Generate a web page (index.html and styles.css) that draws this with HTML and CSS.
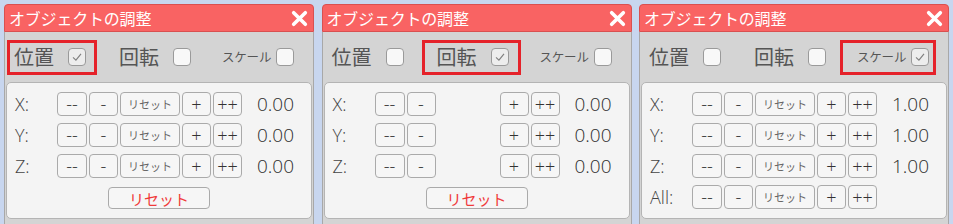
FILE: index.html
```html
<!DOCTYPE html>
<html lang="ja">
<head>
<meta charset="utf-8">
<link rel="stylesheet" href="styles.css">
</head>
<body>
<div class="panels">
  <!-- Panel 1: position -->
  <div class="panel">
    <div class="titlebar"><span class="title">オブジェクトの調整</span>
      <svg class="close" viewBox="0 0 16 16"><path d="M2.5 2.5 L13.5 13.5 M13.5 2.5 L2.5 13.5"/></svg></div>
    <div class="body">
      <div class="modes">
        <div class="mode m1 on"><span class="big">位置</span><span class="cb checked"><svg viewBox="0 0 18 18"><path d="M4.5 9.5 L7.8 12.5 L13.5 5.5"/></svg></span></div>
        <div class="mode m2"><span class="big">回転</span><span class="cb"></span></div>
        <div class="mode m3"><span class="small">スケール</span><span class="cb"></span></div>
      </div>
      <div class="card">
        <div class="row"><span class="axis">X:</span><span class="btn w30">--</span><span class="btn w29">-</span><span class="btn w60 rs">リセット</span><span class="btn w29">+</span><span class="btn w29">++</span><span class="val">0.00</span></div>
        <div class="row"><span class="axis">Y:</span><span class="btn w30">--</span><span class="btn w29">-</span><span class="btn w60 rs">リセット</span><span class="btn w29">+</span><span class="btn w29">++</span><span class="val">0.00</span></div>
        <div class="row"><span class="axis">Z:</span><span class="btn w30">--</span><span class="btn w29">-</span><span class="btn w60 rs">リセット</span><span class="btn w29">+</span><span class="btn w29">++</span><span class="val">0.00</span></div>
        <div class="resetrow"><span class="reset">リセット</span></div>
      </div>
    </div>
  </div>
  <!-- Panel 2: rotation -->
  <div class="panel">
    <div class="titlebar"><span class="title">オブジェクトの調整</span>
      <svg class="close" viewBox="0 0 16 16"><path d="M2.5 2.5 L13.5 13.5 M13.5 2.5 L2.5 13.5"/></svg></div>
    <div class="body">
      <div class="modes">
        <div class="mode m1"><span class="big">位置</span><span class="cb"></span></div>
        <div class="mode m2 on"><span class="big">回転</span><span class="cb checked"><svg viewBox="0 0 18 18"><path d="M4.5 9.5 L7.8 12.5 L13.5 5.5"/></svg></span></div>
        <div class="mode m3"><span class="small">スケール</span><span class="cb"></span></div>
      </div>
      <div class="card">
        <div class="row"><span class="axis">X:</span><span class="btn w30">--</span><span class="btn w29">-</span><span class="btn w60 rs hidden">リセット</span><span class="btn w29">+</span><span class="btn w29">++</span><span class="val">0.00</span></div>
        <div class="row"><span class="axis">Y:</span><span class="btn w30">--</span><span class="btn w29">-</span><span class="btn w60 rs hidden">リセット</span><span class="btn w29">+</span><span class="btn w29">++</span><span class="val">0.00</span></div>
        <div class="row"><span class="axis">Z:</span><span class="btn w30">--</span><span class="btn w29">-</span><span class="btn w60 rs hidden">リセット</span><span class="btn w29">+</span><span class="btn w29">++</span><span class="val">0.00</span></div>
        <div class="resetrow"><span class="reset">リセット</span></div>
      </div>
    </div>
  </div>
  <!-- Panel 3: scale -->
  <div class="panel">
    <div class="titlebar"><span class="title">オブジェクトの調整</span>
      <svg class="close" viewBox="0 0 16 16"><path d="M2.5 2.5 L13.5 13.5 M13.5 2.5 L2.5 13.5"/></svg></div>
    <div class="body">
      <div class="modes">
        <div class="mode m1"><span class="big">位置</span><span class="cb"></span></div>
        <div class="mode m2"><span class="big">回転</span><span class="cb"></span></div>
        <div class="mode m3 on"><span class="small">スケール</span><span class="cb checked"><svg viewBox="0 0 18 18"><path d="M4.5 9.5 L7.8 12.5 L13.5 5.5"/></svg></span></div>
      </div>
      <div class="card">
        <div class="row"><span class="axis">X:</span><span class="btn w30">--</span><span class="btn w29">-</span><span class="btn w60 rs">リセット</span><span class="btn w29">+</span><span class="btn w29">++</span><span class="val">1.00</span></div>
        <div class="row"><span class="axis">Y:</span><span class="btn w30">--</span><span class="btn w29">-</span><span class="btn w60 rs">リセット</span><span class="btn w29">+</span><span class="btn w29">++</span><span class="val">1.00</span></div>
        <div class="row"><span class="axis">Z:</span><span class="btn w30">--</span><span class="btn w29">-</span><span class="btn w60 rs">リセット</span><span class="btn w29">+</span><span class="btn w29">++</span><span class="val">1.00</span></div>
        <div class="row"><span class="axis">All:</span><span class="btn w30">--</span><span class="btn w29">-</span><span class="btn w60 rs">リセット</span><span class="btn w29">+</span><span class="btn w29">++</span></div>
      </div>
    </div>
  </div>
</div>
</body>
</html>
```

FILE: styles.css
```css
html, body {
  margin: 0;
  padding: 0;
  height: 224px;
  overflow: hidden;
}
body {
  background: #c8d6ef;
  font-family: "Noto Sans CJK JP", "Noto Sans", sans-serif;
  color: #444;
}
.panels {
  display: flex;
  justify-content: space-between;
  width: 945px;
  padding: 4px 0 0 4px;
}
.panel {
  width: 310px;
  height: 240px;
  display: flex;
  flex-direction: column;
}
.titlebar {
  height: 28px;
  box-sizing: border-box;
  background: #f96363;
  border: 1px solid #d95050;
  border-radius: 4px 4px 0 0;
  display: flex;
  align-items: center;
  justify-content: space-between;
  padding: 0 5px 0 4px;
}
.title {
  color: #fff;
  font-size: 16px;
  font-weight: 400;
  line-height: 1;
  letter-spacing: -0.2px;
}
.close {
  width: 17px;
  height: 17px;
}
.close path {
  stroke: #fff;
  stroke-width: 3.4;
  stroke-linecap: round;
  fill: none;
}
.body {
  flex: 1;
  background: #d4d4d4;
  border-left: 1px solid #a8a8a8;
  border-right: 1px solid #a8a8a8;
  display: flex;
  flex-direction: column;
}
.modes {
  height: 50px;
  display: flex;
  align-items: center;
  padding-left: 2px;
}
.mode {
  height: 35px;
  box-sizing: border-box;
  border: 3px solid transparent;
  display: flex;
  align-items: center;
}
.mode.on {
  border-color: #e5222a;
}
.m1 { width: 90px; padding-left: 4px; }
.m2 { width: 99px; padding-left: 12px; margin-left: 7px; }
.m3 { width: 96px; padding-left: 14px; margin-left: 2px; }
.big {
  font-size: 20px;
  line-height: 1;
  color: #555;
  width: 54px;
}
.small {
  font-size: 12.5px;
  line-height: 1;
  color: #555;
  width: 54px;
  letter-spacing: -0.2px;
}
.cb {
  width: 18px;
  height: 18px;
  box-sizing: border-box;
  border: 1px solid #9a9a9a;
  border-radius: 4px;
  background: #f8f8f8;
  display: flex;
}
.cb.checked {
  background: #ededed;
}
.cb svg {
  width: 16px;
  height: 16px;
}
.cb path {
  fill: none;
  stroke: #808080;
  stroke-width: 1.3;
}
.card {
  margin: 0 1px;
  height: 137px;
  box-sizing: border-box;
  background: #f4f4f4;
  border: 1px solid #b4b4b4;
  border-radius: 5px;
  padding: 9px 0 0 8px;
  display: flex;
  flex-direction: column;
  gap: 7px;
}
.row {
  height: 24px;
  display: flex;
  align-items: center;
}
.axis {
  width: 42px;
  font-family: "Open Sans", "Noto Sans", sans-serif;
  font-weight: 300;
  font-size: 18px;
  color: #444;
  line-height: 1;
}
.btn {
  height: 24px;
  box-sizing: border-box;
  border: 1px solid #aaaaaa;
  border-radius: 4px;
  background: #f6f6f6;
  margin-right: 2px;
  display: flex;
  align-items: center;
  justify-content: center;
  font-family: "Open Sans", "Noto Sans", sans-serif;
  font-weight: 300;
  font-size: 18px;
  color: #333;
  line-height: 1;
}
.w30 { width: 30px; }
.w29 { width: 29px; }
.w60 { width: 60px; }
.rs {
  font-family: "Noto Sans CJK JP", sans-serif;
  font-weight: 400;
  font-size: 11px;
  color: #666;
}
.hidden {
  visibility: hidden;
}
.val {
  margin-left: 13px;
  font-family: "Open Sans", "Noto Sans", sans-serif;
  font-weight: 300;
  font-size: 19px;
  color: #2e2e2e;
  line-height: 1;
}
.resetrow {
  display: flex;
  justify-content: center;
  margin-top: 2px;
  padding-right: 8px;
}
.reset {
  width: 102px;
  height: 22px;
  box-sizing: border-box;
  border: 1px solid #aaaaaa;
  border-radius: 4px;
  background: #f6f6f6;
  display: flex;
  align-items: center;
  justify-content: center;
  color: #f03a3a;
  font-size: 15px;
  line-height: 1;
}
```
